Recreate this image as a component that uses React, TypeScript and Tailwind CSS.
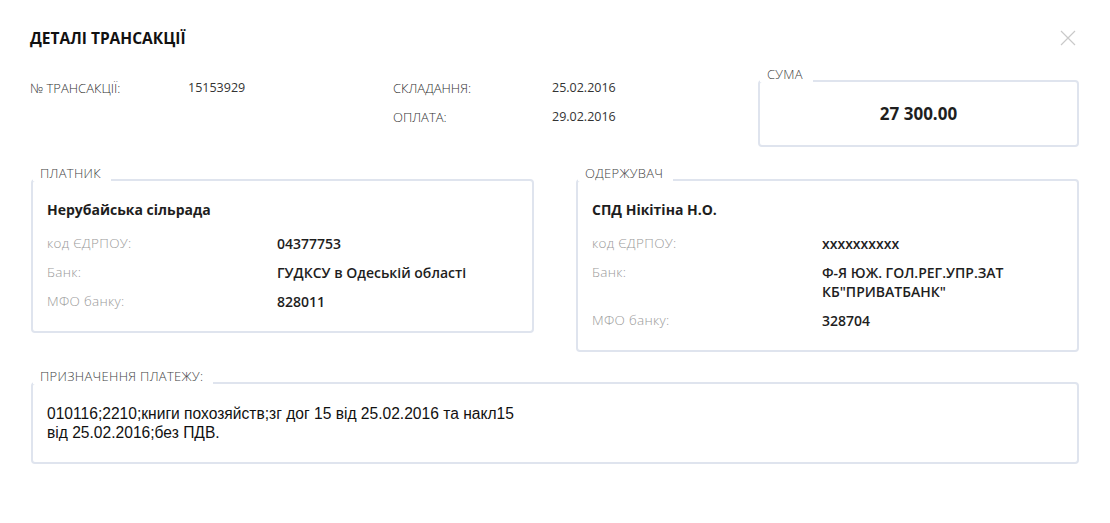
import type { ReactNode } from 'react';

const sans = 'font-["Open_Sans",sans-serif]';

function Box({ label, children, className = '' }: { label: string; children: ReactNode; className?: string }) {
  return (
    <div className={`relative border-2 border-[#dfe4ee] rounded-[4px] ${className}`}>
      <span className="absolute left-0 top-[-16px] h-[16px] bg-white pl-[7px] pr-[10px] text-[13px] leading-[16px] tracking-[0.3px] font-light text-[#444] uppercase">
        {label}
      </span>
      {children}
    </div>
  );
}

function Row({ label, value }: { label: string; value: ReactNode }) {
  return (
    <div className="flex leading-[19px]">
      <div className="w-[230px] shrink-0 text-[13.5px] tracking-[0.3px] font-light text-[#9a9a9a]">{label}</div>
      <div className="text-[14px] font-semibold text-[#1e1e1e]">{value}</div>
    </div>
  );
}

function Party({ label, name, code, bank, mfo }: { label: string; name: string; code: string; bank: ReactNode; mfo: string }) {
  return (
    <Box label={label} className="w-[503px]">
      <div className="px-[14px] pt-[19px] pb-[20px]">
        <div className="text-[14px] leading-[20px] font-bold text-[#1e1e1e]">{name}</div>
        <div className="mt-[14px] flex flex-col gap-[10px]">
          <Row label="код ЄДРПОУ:" value={code} />
          <Row label="Банк:" value={bank} />
          <Row label="МФО банку:" value={mfo} />
        </div>
      </div>
    </Box>
  );
}

export default function App() {
  return (
    <div className={`${sans} w-[1110px] h-[523px] bg-white px-[31px] pt-[28px] text-[#333]`}>
      <div className="flex items-center justify-between">
        <h1 className="-ml-px text-[15.5px] leading-[20px] font-bold text-[#111] uppercase">Деталі трансакції</h1>
        <button className="mr-[3px] w-[16px] h-[16px] text-[#c9c9c9]" aria-label="close">
          <svg viewBox="0 0 16 16" width="16" height="16" fill="none" stroke="currentColor" strokeWidth="1.2">
            <path d="M1 1L15 15M15 1L1 15" />
          </svg>
        </button>
      </div>

      <div className="mt-[32px] flex items-start justify-between">
        <div className="-ml-px grid grid-cols-[158px_205px_159px_160px] gap-y-[13px] leading-[16px]">
          <div className="text-[13px] font-light text-[#333]">№ ТРАНСАКЦІЇ:</div>
          <div className="text-[12.5px] text-[#333]">15153929</div>
          <div className="text-[13px] font-light text-[#333]">СКЛАДАННЯ:</div>
          <div className="text-[12.5px] text-[#333]">25.02.2016</div>
          <div />
          <div />
          <div className="text-[13px] font-light text-[#333]">ОПЛАТА:</div>
          <div className="text-[12.5px] text-[#333]">29.02.2016</div>
        </div>
        <Box label="Сума" className="w-[321px] h-[67px] flex items-center justify-center">
          <div className="text-[17px] font-bold text-[#1e1e1e]">27 300.00</div>
        </Box>
      </div>

      <div className="mt-[32px] flex items-start justify-between">
        <Party label="Платник" name="Нерубайська сільрада" code="04377753" bank="ГУДКСУ в Одеській області" mfo="828011" />
        <Party
          label="Одержувач"
          name="СПД Нікітіна Н.О."
          code="xxxxxxxxxx"
          bank={
            <>
              Ф-Я ЮЖ. ГОЛ.РЕГ.УПР.ЗАТ
              <br />
              КБ"ПРИВАТБАНК"
            </>
          }
          mfo="328704"
        />
      </div>

      <Box label="Призначення платежу:" className="mt-[30px]">
        <div className='px-[14px] pt-[20px] pb-[20px] font-["Liberation_Sans",Arial,sans-serif] text-[15.6px] leading-[19px] text-[#111]'>
          010116;2210;книги похозяйств;зг дог 15 від 25.02.2016 та накл15
          <br />
          від 25.02.2016;без ПДВ.
        </div>
      </Box>
    </div>
  );
}
